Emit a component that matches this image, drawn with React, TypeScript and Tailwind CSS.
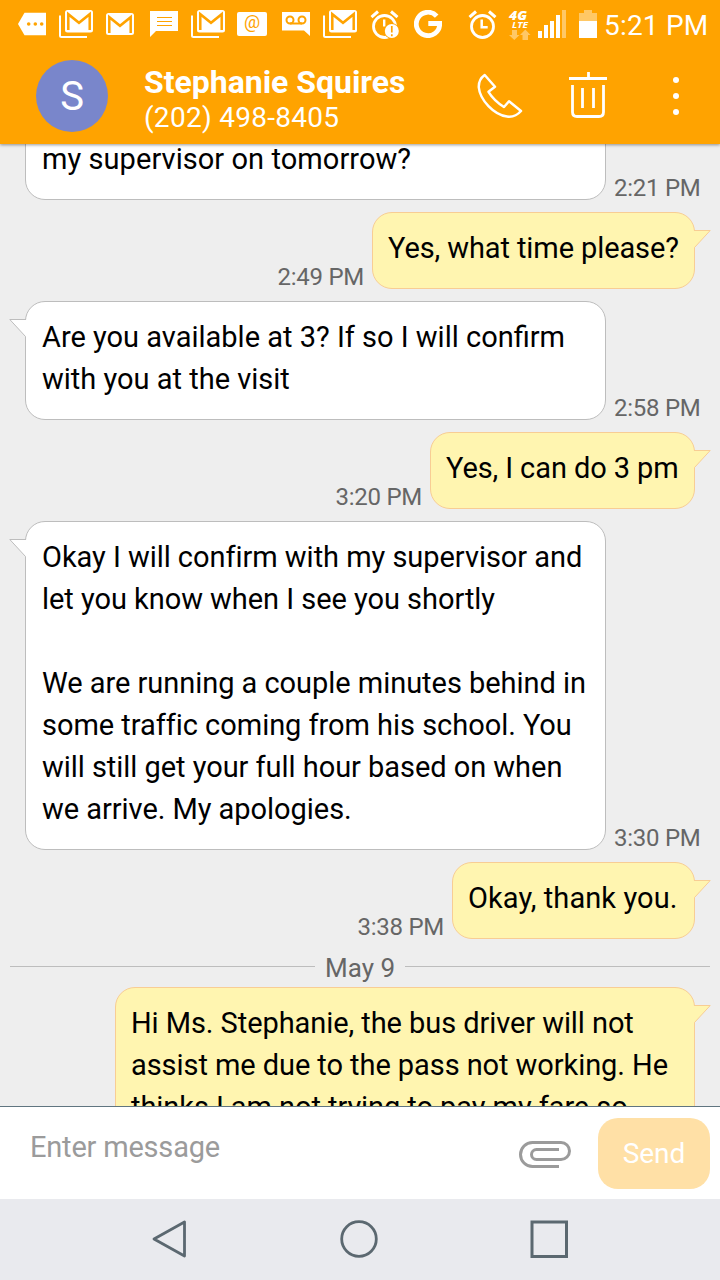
import type { ReactNode } from "react";

type Message = {
  lines: string[];
  className: string;
  time?: string;
  mine?: boolean;
  noTail?: boolean;
};

const before: Message[] = [
  {
    lines: ["my supervisor on tomorrow?"],
    className: "w-[581px] tracking-[0.06px]",
    time: "2:21 PM",
    noTail: true,
  },
  {
    lines: ["Yes, what time please?"],
    className: "w-[323px] tracking-[-0.1px]",
    time: "2:49 PM",
    mine: true,
  },
  {
    lines: ["Are you available at 3? If so I will confirm", "with you at the visit"],
    className: "w-[581px]",
    time: "2:58 PM",
  },
  {
    lines: ["Yes, I can do 3 pm"],
    className: "w-[265px] tracking-[-0.1px]",
    time: "3:20 PM",
    mine: true,
  },
  {
    lines: [
      "Okay I will confirm with my supervisor and",
      "let you know when I see you shortly",
      "",
      "We are running a couple minutes behind in",
      "some traffic coming from his school. You",
      "will still get your full hour based on when",
      "we arrive. My apologies.",
    ],
    className: "w-[581px] tracking-[-0.04px]",
    time: "3:30 PM",
  },
  {
    lines: ["Okay, thank you."],
    className: "w-[243px] tracking-[0.08px]",
    time: "3:38 PM",
    mine: true,
  },
];

const after: Message = {
  lines: [
    "Hi Ms. Stephanie, the bus driver will not",
    "assist me due to the pass not working. He",
    "thinks I am not trying to pay my fare so",
  ],
  className: "w-[580px] tracking-[-0.07px]",
  mine: true,
};

const MailStack = ({ className }: { className: string }) => (
  <svg className={`h-[28px] w-[34px] shrink-0 ${className}`} viewBox="0 0 34 28" fill="none">
    <path d="M1 5.500v20q0 1.500 1.500 1.500H28" stroke="#fff" strokeWidth="2" />
    <rect x="6" y="0" width="28" height="22.500" rx="2.500" fill="#fff" />
    <path d="M9.300 20V4.200L20 12.800 30.700 4.200V20" stroke="#ffa300" strokeWidth="2.500" />
  </svg>
);

const Alarm = ({ className, children }: { className: string; children?: ReactNode }) => (
  <svg className={`h-[30px] w-[30px] shrink-0 ${className}`} viewBox="0 0 30 30" fill="none">
    <circle cx="14.500" cy="17.500" r="11" stroke="#fff" strokeWidth="2.800" />
    <path d="M1.500 8.200 8 2.500M21 2.500l6.500 5.700" stroke="#fff" strokeWidth="3" />
    {children}
  </svg>
);

const StatusBar = () => (
  <div className="flex h-12 items-center text-white">
    <svg className="ml-[18px] h-[24px] w-[28px] shrink-0" viewBox="0 0 28 24">
      <path d="M6.500.8H28v22.500H6.500L0 12z" fill="#fff" />
      <circle cx="10.700" cy="12" r="1.800" fill="#ffa300" />
      <circle cx="17.300" cy="12" r="1.800" fill="#ffa300" />
      <circle cx="23.700" cy="12" r="1.800" fill="#ffa300" />
    </svg>
    <MailStack className="ml-[13px]" />
    <svg className="ml-[13px] h-[24px] w-[28px] shrink-0" viewBox="0 0 28 24" fill="none">
      <rect y="1" width="28" height="22" rx="2.500" fill="#fff" />
      <path d="M3.300 21V5.200L14 13.800 24.700 5.200V21" stroke="#ffa300" strokeWidth="2.500" />
    </svg>
    <svg className="ml-[16px] h-[26px] w-[28px] shrink-0" viewBox="0 0 28 26">
      <path d="M0 0h28v20H6l-6 6z" fill="#fff" />
      <path d="M7 6.500h15M7 10.500h15M7 14.500h15" stroke="#ffa300" strokeWidth="1" />
    </svg>
    <MailStack className="ml-[13px]" />
    <svg className="ml-[12px] h-[24px] w-[30px] shrink-0" viewBox="0 0 30 24">
      <rect width="30" height="24" rx="2" fill="#fff" />
      <text x="15" y="16" textAnchor="middle" fontSize="18" fontFamily="Roboto, sans-serif" fill="#ffa300">
        @
      </text>
    </svg>
    <svg className="ml-[15px] h-[24px] w-[28px] shrink-0" viewBox="0 0 28 24" fill="none">
      <path d="M0 0h28v24l-6-5.500H0z" fill="#fff" />
      <path d="M8 11.500h12" stroke="#ffa300" strokeWidth="2" />
      <circle cx="8" cy="8" r="3.500" stroke="#ffa300" strokeWidth="2" />
      <circle cx="20" cy="8" r="3.500" stroke="#ffa300" strokeWidth="2" />
    </svg>
    <MailStack className="ml-[13px]" />
    <Alarm className="ml-[13px]">
      <path d="M14.200 10.500v7" stroke="#fff" strokeWidth="2.400" />
      <circle cx="21.800" cy="22" r="7.800" fill="#ffa300" />
      <circle cx="21.800" cy="22" r="7" fill="#fff" />
      <path d="M21.800 17v6.500M21.800 25.300v2" stroke="#ffa300" strokeWidth="1.700" />
    </Alarm>
    <svg className="ml-[14px] h-[28px] w-[28px] shrink-0" viewBox="0 0 28 28" fill="none">
      <path d="M22.700 6.100A11.700 11.700 0 1 0 25.700 14v-.5H14.300" stroke="#fff" strokeWidth="4.800" />
    </svg>
    <Alarm className="ml-[26px]">
      <path d="M13.700 10.500v7.800h6" stroke="#fff" strokeWidth="2.500" />
    </Alarm>
    <svg className="ml-[10px] h-[38px] w-[23px] shrink-0" viewBox="-1 -5 23 38">
      <g fill="#fff" fontFamily="'Open Sans', sans-serif" fontStyle="italic">
        <text x="0" y="9.500" fontSize="12.500" fontWeight="800" textLength="18" lengthAdjust="spacingAndGlyphs">4G</text>
        <text x="3" y="18" fontSize="9" fontWeight="700" textLength="16" lengthAdjust="spacingAndGlyphs">LTE</text>
      </g>
      <path d="M3 20h5v5h2.500L5.300 30 0 25h3zM13.500 30v-5h-2.500l5.300-5.500L21.500 25H19v5z" fill="#ffc866" />
    </svg>
    <svg className="ml-[7px] h-[28px] w-[28px] shrink-0" viewBox="0 0 28 28">
      <path d="M0 21h4v7H0zM6 15h4v13H6zM12 11h4v17h-4zM18 5h4v23h-4z" fill="#fff" />
      <path d="M24 0h4v28h-4z" fill="#ffc866" />
    </svg>
    <svg className="ml-[13px] h-[28px] w-[18px] shrink-0" viewBox="0 0 18 28">
      <path d="M5 0h8v3h5v8H0V3h5z" fill="#ffc866" />
      <path d="M0 11h18v17H0z" fill="#fff" />
    </svg>
    <span className="ml-[7px] mt-[3px] whitespace-nowrap text-[28px] tracking-[0.2px]">5:21 PM</span>
  </div>
);

const Header = () => (
  <header className="relative z-10 h-36 shrink-0 bg-[#ffa300] text-white shadow-[0_1px_3px_rgba(0,0,0,0.4)]">
    <StatusBar />
    <div className="flex h-24 items-center">
      <div className="ml-9 flex size-[72px] items-center justify-center rounded-full bg-[#7986cb] pt-0.5 text-[40px]">
        S
      </div>
      <div className="ml-9 w-[333px] whitespace-nowrap pt-[7px]">
        <h1 className="text-[32px] font-bold leading-9 tracking-[-0.02px]">Stephanie Squires</h1>
        <p className="text-[28px] leading-9 tracking-[0.28px]">(202) 498-8405</p>
      </div>
      <svg className="-mt-0.5 h-[46px] w-[46px]" viewBox="0 0 46 46" fill="none" stroke="#fff" strokeWidth="2.500" strokeLinejoin="round">
        <path d="M7.700 3C3.500 6 1.500 9.500 1.800 15.500C3 28 17 43 30 44.500C36 45.300 40.500 43 44 39L32 29.300L27 35C21.500 31.500 15 25.500 11.500 19.800L18 14.800Z" />
      </svg>
      <svg className="-mt-0.5 ml-[46px] h-[46px] w-[38px]" viewBox="0 0 38 46" fill="none" stroke="#fff" strokeWidth="2.800">
        <path d="M19.500 0v6M0 6.500h38M3.500 13v27q0 4.500 4.500 4.500h22q4.500 0 4.500-4.500V13M13.500 16v20M24.500 16v20" />
      </svg>
      <div className="ml-[66px] flex flex-col gap-[10px]">
        <i className="size-1.5 rounded-full bg-white" />
        <i className="size-1.5 rounded-full bg-white" />
        <i className="size-1.5 rounded-full bg-white" />
      </div>
    </div>
  </header>
);

const Bubble = ({ lines, className, time, mine, noTail }: Message) => (
  <div className={`flex items-end gap-2 ${mine ? "flex-row-reverse pr-[25px]" : "pl-[25px]"}`}>
    <div
      className={`relative whitespace-nowrap rounded-[20px] border pb-[19px] pt-[14px] text-[29px] leading-[42px] text-black ${
        mine ? "border-[#f8cd94] bg-[#fff5b0] pl-[15px]" : "border-[#bdbdbd] bg-white pl-4"
      } ${className}`}
    >
      {lines.map((line, i) => (
        <p key={i} className="h-[42px]">
          {line}
        </p>
      ))}
      {!noTail && mine && (
        <svg className="absolute -right-[17px] top-[17px] h-[19px] w-[19px]" viewBox="0 0 19 19">
          <path d="M0 .5h2.500H18.200L2.500 17.500H0z" fill="#fff5b0" />
          <path d="M2 .5H18.200L2.500 17.500" fill="none" stroke="#f8cd94" />
        </svg>
      )}
      {!noTail && !mine && (
        <svg className="absolute -left-[17px] top-[17px] h-[19px] w-[19px]" viewBox="0 0 19 19">
          <path d="M19 .5H.8L16.500 17.500H19z" fill="#fff" />
          <path d="M17 .5H.8L16.500 17.500" fill="none" stroke="#bdbdbd" />
        </svg>
      )}
    </div>
    {time && (
      <time className="whitespace-nowrap text-[24px] leading-6 tracking-[-0.25px] text-[#666]">{time}</time>
    )}
  </div>
);

const Composer = () => (
  <div className="flex h-[93px] shrink-0 items-center border-t border-[#607580] bg-white">
    <span className="-mt-2.5 ml-[30px] w-[489px] text-[29px] tracking-[-0.2px] text-[#9b9b9b]">
      Enter message
    </span>
    <svg className="mt-[3px] h-[28px] w-[52px]" viewBox="0 0 52 28" fill="none" stroke="#9b9b9b" strokeWidth="3">
      <path d="M40 25.500H13.500A12 12 0 0 1 13.500 1.500H42A8.500 8.500 0 0 1 42 18.500H17.500A5 5 0 0 1 17.500 8.500H40" />
    </svg>
    <button className="ml-[27px] h-[71px] w-[112px] rounded-[20px] bg-[#ffe0a6] pt-0.5 text-[28px] text-white">
      Send
    </button>
  </div>
);

const NavBar = () => (
  <nav className="flex h-[81px] shrink-0 items-center bg-[#e9eaee] pb-px">
    <svg className="ml-[152px] h-[38px] w-[34px]" viewBox="0 0 34 38" fill="none" stroke="#5b6870" strokeWidth="2.800" strokeLinejoin="round">
      <path d="M32.500 2v34L2 19z" />
    </svg>
    <svg className="ml-[154px] size-[38px]" viewBox="0 0 38 38" fill="none" stroke="#5b6870" strokeWidth="2.800">
      <circle cx="19" cy="19" r="17.300" />
    </svg>
    <svg className="ml-[152px] size-[38px]" viewBox="0 0 38 38" fill="none" stroke="#5b6870" strokeWidth="3">
      <rect x="2" y="2" width="34.500" height="34.500" />
    </svg>
  </nav>
);

const App = () => {
  return (
    <main className="flex h-[1280px] w-[720px] flex-col overflow-hidden bg-[#eee] font-[Roboto,sans-serif]">
      <Header />
      <section className="flex h-[962px] shrink-0 flex-col overflow-hidden">
        <div className="-mt-[21px] flex shrink-0 flex-col gap-3">
          {before.map((m, i) => (
            <Bubble key={i} {...m} />
          ))}
        </div>
        <div className="flex h-12 shrink-0 items-center gap-[10px] px-[10px]">
          <div className="mt-[7px] h-px flex-1 bg-[#bdbdbd]" />
          <span className="mt-[11px] text-[26px] text-[#666]">May 9</span>
          <div className="mt-[7px] h-px flex-1 bg-[#bdbdbd]" />
        </div>
        <Bubble {...after} />
      </section>
      <Composer />
      <NavBar />
    </main>
  );
};

export default App;
